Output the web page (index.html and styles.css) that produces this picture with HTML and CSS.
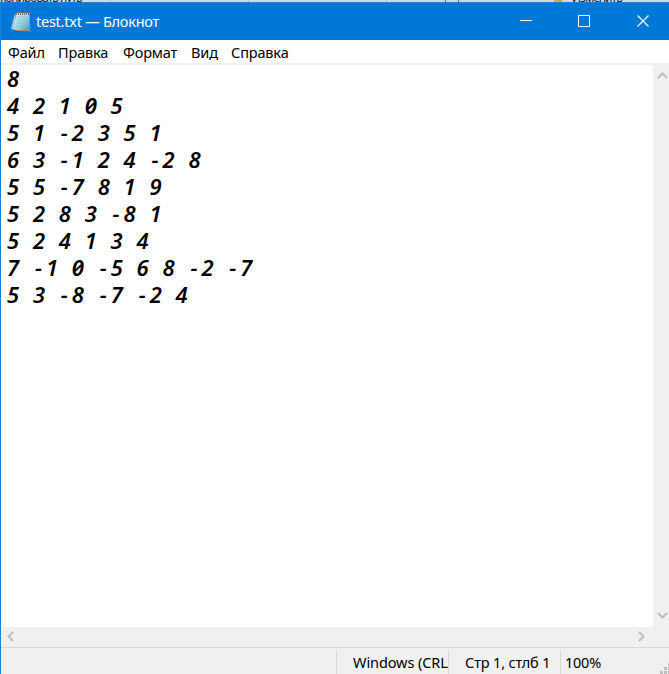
FILE: index.html
```html
<!DOCTYPE html>
<html lang="ru">
<head>
<meta charset="utf-8">
<title>test.txt — Блокнот</title>
<link rel="stylesheet" href="styles.css">
</head>
<body>
<div class="backdrop"><span class="path">копировать путь</span><i></i><i></i><i></i><b></b><em></em><span class="edit">Изменить</span></div>
<main class="window">
  <header class="titlebar">
    <svg class="app-icon" width="20" height="22" viewBox="0 0 20 22">
      <defs><linearGradient id="page" x1="0" y1="0" x2="1" y2="1"><stop offset="0" stop-color="#d3eff5"/><stop offset=".55" stop-color="#9bd5e3"/><stop offset="1" stop-color="#479cb6"/></linearGradient></defs>
      <path d="M4 3 0 19l5 1z" fill="#a7cfdb"/>
      <path d="M17 3h2v18H5v-1h12z" fill="#a98b5b"/>
      <path d="M5 3h13v17H3z" fill="url(#page)"/>
      <path d="M6 7h11M6 10h11M5 13h12M5 16h12" stroke="#86bdcb" stroke-width=".7"/>
      <path d="M5.500 2v3M7.500 2v3M9.500 2v3M11.500 2v3M13.500 2v3M15.500 2v3M17.500 2v3" stroke="#617681"/>
    </svg>
    <span class="title">test.txt — Блокнот</span>
    <div class="controls">
      <svg width="58" height="38" viewBox="0 0 58 38"><path d="M20 18.500h12" stroke="#fff"/></svg>
      <svg width="58" height="38" viewBox="0 0 58 38"><path d="M20.500 13.500h11v11h-11z" fill="none" stroke="#fff"/></svg>
      <svg width="53" height="38" viewBox="0 0 53 38"><path d="m21.500 13.500 11 11m0-11-11 11" fill="none" stroke="#fff" stroke-width="1.200"/></svg>
    </div>
  </header>
  <nav class="menu"><span class="m1">Файл</span><span class="m2">Правка</span><span class="m3">Формат</span><span class="m4">Вид</span><span class="m5">Справка</span></nav>
  <section class="editor">
<pre class="text">8
4 2 1 0 5
5 1 <s>-</s>2 3 5 1
6 3 <s>-</s>1 2 4 <s>-</s>2 8
5 5 <s>-</s>7 8 1 9
5 2 8 3 <s>-</s>8 1
5 2 4 1 3 4
7 <s>-</s>1 0 <s>-</s>5 6 8 <s>-</s>2 <s>-</s>7
5 3 <s>-</s>8 <s>-</s>7 <s>-</s>2 4</pre>
    <div class="vscroll">
      <svg width="16" height="20"><path d="m5 13 4.500-4.500L14 13" class="chevron"/></svg>
      <svg width="16" height="20"><path d="m5 6 4.500 4.500L14 6" class="chevron"/></svg>
    </div>
  </section>
  <div class="hscroll">
    <svg width="20" height="20"><path d="m12 5-4.500 4.500L12 14" class="chevron"/></svg>
    <svg width="20" height="20"><path d="m7 5 4.500 4.500L7 14" class="chevron"/></svg>
  </div>
  <footer class="status">
    <div class="encoding"><span>Windows (CRL</span></div>
    <div class="position"><span>Стр 1, стлб 1</span></div>
    <div class="scale"><span>100%</span></div>
    <svg class="grip" width="9" height="11"><path d="M8 0h3v3H8zM4 4h3v3H4zM8 4h3v3H8zM0 8h3v3H0zM4 8h3v3H4zM8 8h3v3H8z" fill="#bfbfbf"/></svg>
  </footer>
</main>
</body>
</html>
```
FILE: styles.css
```css
* { box-sizing: border-box; }
body { margin: 0; width: 669px; height: 674px; overflow: hidden; font: 15px/20px "Noto Sans", "Open Sans", sans-serif; color: #000; }
svg { display: block; flex: none; }
.backdrop { display: flex; height: 2px; overflow: hidden; background: #d5d8da; font-size: 12px; line-height: 20px; color: #222; }
.backdrop span { margin-top: -12px; white-space: nowrap; letter-spacing: -1px; }
.path { width: 110px; }
.backdrop i { width: 138px; border-left: 1px solid #b9bcc0; }
.backdrop b { width: 14px; margin-left: -79px; border: solid #60646b; border-width: 0 1px; }
.backdrop em { width: 8px; height: 2px; margin: 0 10px 0 95px; background: #d5ab3c; }
.window { display: flex; flex-direction: column; height: 672px; border-left: 1px solid #1583dc; background: #fff; }
.titlebar { display: flex; height: 38px; flex: none; background: #0078d7; border-top: 1px solid #1b82d4; color: #fff; }
.app-icon { margin: 7px 5px 0 10px; }
.title { margin-top: 8px; font-size: 14.5px; white-space: nowrap; letter-spacing: -.25px; }
.controls { display: flex; margin: -1px 0 0 auto; }
.controls svg { height: 38px; }
.menu { display: flex; height: 25px; flex: none; padding: 2px 0 0 7px; border-bottom: 2px solid #f0f0f0; font-size: 14.5px; white-space: nowrap; }
.menu span { letter-spacing: -.15px; }
.m1 { width: 50px; }
.m2 { width: 65px; }
.m3 { width: 68px; }
.m4 { width: 40px; }
.editor { display: flex; height: 562px; flex: none; }
.text { flex: 1; margin: 0; padding: 0 0 0 6px; font: italic 600 22px/27px "Noto Sans", sans-serif; font-feature-settings: "zero"; letter-spacing: .47px; word-spacing: 7.120px; }
.text s { display: inline-block; width: 13px; padding-left: 2px; text-decoration: none; }
.vscroll { display: flex; flex-direction: column; justify-content: space-between; width: 16px; background: #f0f0f0; }
.chevron { fill: none; stroke: #bdbdbd; stroke-width: 2; }
.hscroll { display: flex; justify-content: space-between; height: 20px; flex: none; padding-right: 17px; background: #f0f0f0; }
.status { display: flex; flex: 1; border-top: 1px solid #d7d7d7; background: #f0f0f0; font-size: 14.5px; white-space: nowrap; }
.status div { margin-top: 2px; padding-top: 2px; border-left: 1px solid #d7d7d7; overflow: hidden; }
.encoding { width: 112px; margin-left: 335px; padding-left: 16px; letter-spacing: -.1px; }
.position { width: 112px; padding-left: 16px; letter-spacing: -.15px; }
.scale { width: 99px; padding-left: 4px; letter-spacing: -.25px; }
.grip { margin: 15px 0 0 auto; }
```
